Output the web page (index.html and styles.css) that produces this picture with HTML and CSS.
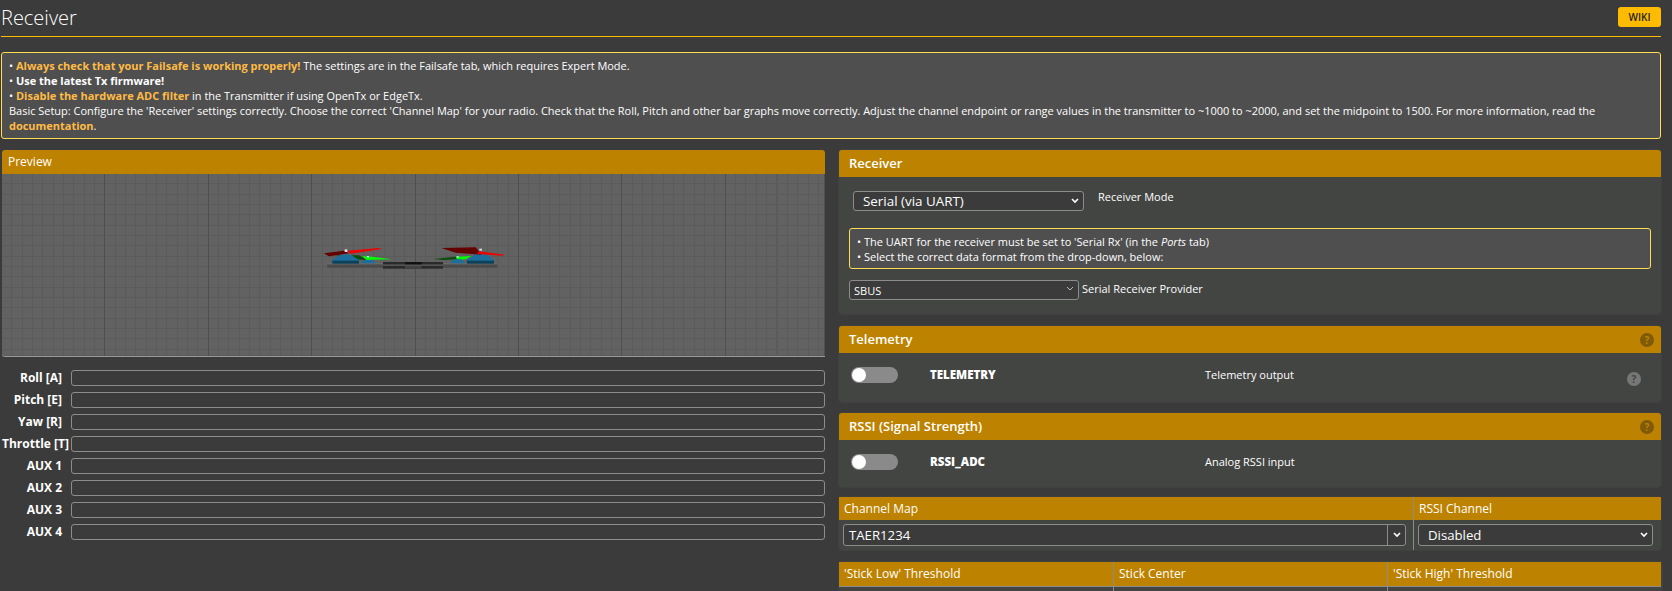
FILE: index.html
```html
<!DOCTYPE html>
<html lang="en">
<head>
    <meta charset="UTF-8">
    <title>Receiver</title>
    <link rel="stylesheet" href="styles.css">
</head>
<body>
    <div class="tab">
        <div class="tab-title">
            <h1>Receiver</h1>
            <a class="btn-wiki">WIKI</a>
        </div>

        <div class="note note-top">
            <p>• <b class="hl">Always check that your Failsafe is working properly!</b> The settings are in the Failsafe tab, which requires Expert Mode.</p>
            <p>• <b>Use the latest Tx firmware!</b></p>
            <p>• <b class="hl">Disable the hardware ADC filter</b> in the Transmitter if using OpenTx or EdgeTx.</p>
            <p>Basic Setup: Configure the 'Receiver' settings correctly. Choose the correct 'Channel Map' for your radio. Check that the Roll, Pitch and other bar graphs move correctly. Adjust the channel endpoint or range values in the transmitter to ~1000 to ~2000, and set the midpoint to 1500. For more information, read the <b class="hl">documentation</b>.</p>
        </div>

        <div class="columns">
            <div class="col-left">
                <div class="preview-head">Preview</div>
                <div class="preview">
                    <!-- quad model, side view -->
                    <svg class="quad" viewBox="0 0 780 240" width="260" height="80">
                        <rect x="145" y="130" width="510" height="13" fill="#4a4a4a"/>
                        <rect x="145" y="130" width="510" height="3" fill="#777"/>
                        <rect x="312" y="126" width="180" height="20" fill="#2a2a2a"/>
                        <rect x="312" y="133" width="180" height="5" fill="#555"/>
                        <rect x="378" y="126" width="50" height="7" fill="#111"/>
                        <rect x="378" y="138" width="50" height="8" fill="#444"/>
                        <polygon points="250,108 280,110 338,118 262,120" fill="#0f0"/>
                        <polygon points="170,106 240,106 262,120 225,118" fill="#0b4d0b"/>
                        <polygon points="465,117 530,110 545,118 490,120" fill="#0b4d0b"/>
                        <polygon points="530,110 578,108 560,118 535,120" fill="#0f0"/>
                        <path d="M245 130 L256 120 L280 120 L291 130 Z" fill="#1c6f9c"/>
                        <path d="M513 130 L525 118 L548 118 L559 130 Z" fill="#1c6f9c"/>
                        <path d="M160 120 L185 104 L215 104 L240 120 L240 130 L160 130 Z" fill="#1c6f9c"/>
                        <rect x="160" y="122" width="80" height="9" fill="#0e4058"/>
                        <path d="M564 120 L590 102 L620 102 L645 120 L645 130 L564 130 Z" fill="#1c6f9c"/>
                        <rect x="564" y="122" width="81" height="9" fill="#0e4058"/>
                        <polygon points="135,100 195,92 210,100 150,109" fill="#640000"/>
                        <polygon points="205,92 300,84 308,87 215,101" fill="#f00000"/>
                        <polygon points="487,84 590,82 607,104 530,98" fill="#640000"/>
                        <polygon points="600,94 677,104 670,107 595,102" fill="#f00000"/>
                        <rect x="197" y="88" width="8" height="8" fill="#ddd"/>
                        <rect x="601" y="86" width="8" height="6" fill="#cde"/>
                        <rect x="264" y="108" width="6" height="5" fill="#cde"/>
                        <rect x="533" y="108" width="6" height="5" fill="#cde"/>
                    </svg>
                </div>
                <div class="bars">
                    <div class="bar-row"><label>Roll [A]</label><div class="meter"></div></div>
                    <div class="bar-row"><label>Pitch [E]</label><div class="meter"></div></div>
                    <div class="bar-row"><label>Yaw [R]</label><div class="meter"></div></div>
                    <div class="bar-row"><label>Throttle [T]</label><div class="meter"></div></div>
                    <div class="bar-row"><label>AUX 1</label><div class="meter"></div></div>
                    <div class="bar-row"><label>AUX 2</label><div class="meter"></div></div>
                    <div class="bar-row"><label>AUX 3</label><div class="meter"></div></div>
                    <div class="bar-row"><label>AUX 4</label><div class="meter"></div></div>
                </div>
            </div>

            <div class="col-right">
                <div class="box box-receiver">
                    <div class="box-head">Receiver</div>
                    <div class="box-body">
                        <div class="mode-row">
                            <select class="sel sel-big"><option>Serial (via UART)</option></select>
                            <span>Receiver Mode</span>
                        </div>
                        <div class="note note-inner">
                            <p>• The UART for the receiver must be set to 'Serial Rx' (in the <i>Ports</i> tab)</p>
                            <p>• Select the correct data format from the drop-down, below:</p>
                        </div>
                        <div class="provider-row">
                            <select class="sel sel-thin"><option>SBUS</option></select>
                            <span>Serial Receiver Provider</span>
                        </div>
                    </div>
                </div>

                <div class="box box-switch">
                    <div class="box-head">Telemetry<span class="help help-head">?</span></div>
                    <div class="box-body switch-row">
                        <span class="toggle"></span>
                        <b class="switch-name">TELEMETRY</b>
                        <span class="switch-desc">Telemetry output</span>
                        <span class="help help-row">?</span>
                    </div>
                </div>

                <div class="box box-switch box-rssi">
                    <div class="box-head">RSSI (Signal Strength)<span class="help help-head">?</span></div>
                    <div class="box-body switch-row">
                        <span class="toggle"></span>
                        <b class="switch-name">RSSI_ADC</b>
                        <span class="switch-desc">Analog RSSI input</span>
                    </div>
                </div>

                <div class="box box-map">
                    <div class="map-col map-col-a">
                        <div class="cell-head">Channel Map</div>
                        <div class="cell-body">
                            <div class="combo">
                                <span class="combo-val">TAER1234</span>
                                <span class="combo-arrow"></span>
                            </div>
                        </div>
                    </div>
                    <div class="map-col map-col-b">
                        <div class="cell-head">RSSI Channel</div>
                        <div class="cell-body">
                            <select class="sel sel-rssi"><option>Disabled</option></select>
                        </div>
                    </div>
                </div>

                <div class="box box-stick">
                    <div class="stick-col"><div class="stick-head">'Stick Low' Threshold</div><div class="stick-body"></div></div>
                    <div class="stick-col"><div class="stick-head">Stick Center</div><div class="stick-body"></div></div>
                    <div class="stick-col"><div class="stick-head">'Stick High' Threshold</div><div class="stick-body"></div></div>
                </div>
            </div>
        </div>
    </div>
</body>
</html>
```

FILE: styles.css
```css
* {
    box-sizing: border-box;
}

html, body {
    height: 100%;
    margin: 0;
    overflow: hidden;
}

body {
    background: #3a3b3a;
    color: #fff;
    font-family: "Open Sans", sans-serif;
    font-size: 11px;
}

.tab {
    width: 1660px;
    margin-left: 1px;
}

.tab-title {
    display: flex;
    justify-content: space-between;
    align-items: flex-start;
    height: 37px;
    padding-top: 7px;
    border-bottom: 1px solid #ffbb00;
}

h1 {
    margin: 0;
    font-size: 20px;
    font-weight: 300;
    line-height: 22px;
    color: #fff;
}

.btn-wiki {
    width: 43px;
    height: 20px;
    line-height: 20px;
    text-align: center;
    background: #ffbb00;
    border-radius: 3px;
    color: #222;
    font-size: 10px;
    font-weight: 600;
}

.note {
    background: #4f4f4f;
    border: 1px solid #ffdd55;
    border-radius: 3px;
    line-height: 15px;
}

.note p {
    margin: 0;
}

.note-top {
    height: 87px;
    margin-top: 15px;
    padding: 5px 7px;
    font-size: 10.97px;
}

.hl {
    color: #ffbb44;
}

.columns {
    display: flex;
    align-items: flex-start;
    margin-top: 11px;
}

.col-left {
    width: 824px;
    padding-left: 1px;
}

.col-right {
    width: 822px;
    margin-left: 14px;
}

.preview-head {
    height: 24px;
    line-height: 24px;
    padding-left: 6px;
    background: #bd8200;
    border-radius: 3px 3px 0 0;
    font-size: 12px;
}

.preview {
    position: relative;
    height: 183px;
    background-color: #626262;
    background-image:
        repeating-linear-gradient(90deg, #4f4f4f 0, #4f4f4f 1px, transparent 1px, transparent 103.4px),
        repeating-linear-gradient(90deg, #5b5b5b 0, #5b5b5b 1px, transparent 1px, transparent 10.34px),
        repeating-linear-gradient(180deg, #5b5b5b 0, #5b5b5b 1px, transparent 1px, transparent 10.34px);
    background-position: -1px -1px;
    border-bottom: 1px solid #9a9a9a;
    border-radius: 0 0 0 3px;
}

.quad {
    position: absolute;
    left: 277px;
    top: 46px;
}

.bars {
    display: flex;
    flex-direction: column;
    gap: 6px;
    margin-top: 13px;
}

.bar-row {
    display: flex;
    align-items: center;
    height: 16px;
}

.bar-row label {
    width: 60px;
    flex: none;
    margin-right: 9px;
    text-align: right;
    white-space: nowrap;
    font-size: 12px;
    font-weight: 700;
    line-height: 14px;
}

.meter {
    flex: 1;
    height: 16px;
    border: 1px solid #8c8c8c;
    border-radius: 3px;
}

.box {
    background: #434543;
    border-radius: 3px;
    margin-bottom: 11px;
    box-shadow: 0 0 0 1px #3f403f;
}

.box-head {
    position: relative;
    height: 27px;
    line-height: 27px;
    padding-left: 10px;
    background: #bd8200;
    border-radius: 3px 3px 0 0;
    font-size: 13px;
    font-weight: 600;
}

.box-receiver {
    height: 164px;
    margin-bottom: 12px;
}

.box-receiver .box-body {
    padding: 14px 10px 0;
}

.mode-row {
    display: flex;
    align-items: flex-start;
    gap: 14px;
    padding-left: 4px;
    height: 37px;
}

.mode-row span {
    line-height: 11px;
}

.sel {
    display: block;
    appearance: none;
    padding: 0 6px;
    color: #fff;
    background-color: #3a3b3a;
    background-image: url("data:image/svg+xml,%3Csvg xmlns='http://www.w3.org/2000/svg' width='8' height='6'%3E%3Cpath d='M1 1l3 3 3-3' fill='none' stroke='%23fff' stroke-width='1.6'/%3E%3C/svg%3E");
    background-repeat: no-repeat;
    background-position: right 4px center;
    border: 1px solid #8c8c8c;
    border-radius: 3px;
    font-family: "Open Sans", sans-serif;
}

.sel-big {
    width: 231px;
    height: 20px;
    padding-left: 9px;
    font-size: 13.4px;
}

.note-inner {
    height: 41px;
    padding: 5px 7px;
    font-size: 11px;
}

.provider-row {
    display: flex;
    align-items: flex-start;
    gap: 3px;
    margin-top: 11px;
}

.provider-row span {
    line-height: 17px;
}

.sel-thin {
    width: 230px;
    height: 20px;
    padding-left: 4px;
    font-size: 11px;
    font-weight: 500;
    background-image: url("data:image/svg+xml,%3Csvg xmlns='http://www.w3.org/2000/svg' width='8' height='6'%3E%3Cpath d='M1 1l3 3 3-3' fill='none' stroke='%23ddd' stroke-width='0.8'/%3E%3C/svg%3E");
    background-position: right 4px top 5px;
}

.box-switch {
    height: 76px;
}

.box-rssi {
    height: 74px;
    margin-bottom: 10px;
}

.switch-row {
    position: relative;
    display: flex;
    align-items: center;
    height: 46px;
    padding: 0 0 0 12px;
}

.toggle {
    position: relative;
    width: 47px;
    height: 16px;
    margin-bottom: 2px;
    background: #8a8a8a;
    border-radius: 8px;
}

.toggle::before {
    content: "";
    position: absolute;
    left: 1px;
    top: 1px;
    width: 14px;
    height: 14px;
    background: #fff;
    border-radius: 50%;
}

.switch-name {
    width: 275px;
    margin-left: 32px;
    margin-bottom: 4px;
    font-size: 11.5px;
    font-weight: 800;
}

.switch-desc {
    margin-bottom: 4px;
}

.help {
    position: absolute;
    width: 14px;
    height: 14px;
    line-height: 14px;
    text-align: center;
    border-radius: 50%;
    font-size: 10px;
    font-weight: 700;
}

.help-head {
    right: 7px;
    top: 7px;
    background: #7f5a08;
    color: #bd8200;
}

.help-row {
    left: 788px;
    top: 19px;
    background: #777;
    color: #434543;
}

.box-map {
    display: flex;
    height: 53px;
    margin-bottom: 12px;
}

.map-col-a {
    width: 574px;
}

.map-col-b {
    flex: 1;
    border-left: 1px solid #8c8c8c;
}

.cell-head {
    height: 23px;
    line-height: 23px;
    padding-left: 5px;
    background: #bd8200;
    font-size: 12px;
}

.cell-body {
    padding: 4px 4px 0;
}

.combo {
    display: flex;
    width: 563px;
    height: 22px;
    background: #3a3b3a;
    border: 1px solid #8c8c8c;
    border-radius: 3px;
}

.combo-val {
    flex: 1;
    padding-left: 5px;
    line-height: 20px;
    font-size: 13.2px;
    border-right: 1px solid #8c8c8c;
}

.combo-arrow {
    width: 17px;
    background-image: url("data:image/svg+xml,%3Csvg xmlns='http://www.w3.org/2000/svg' width='8' height='6'%3E%3Cpath d='M1 1l3 3 3-3' fill='none' stroke='%23fff' stroke-width='1.6'/%3E%3C/svg%3E");
    background-repeat: no-repeat;
    background-position: center;
}

.sel-rssi {
    width: 235px;
    height: 22px;
    padding-left: 9px;
    font-size: 13.2px;
}

.box-stick {
    display: flex;
    width: 823px;
    height: 29px;
    margin-bottom: 0;
}

.stick-col {
    width: 274px;
    border-left: 1px solid #8c8c8c;
}

.stick-col:first-child {
    border-left: none;
}

.stick-head {
    height: 25px;
    line-height: 24px;
    padding-left: 5px;
    background: #bd8200;
    border-bottom: 1px solid #8c8c8c;
    font-size: 12px;
}
```
